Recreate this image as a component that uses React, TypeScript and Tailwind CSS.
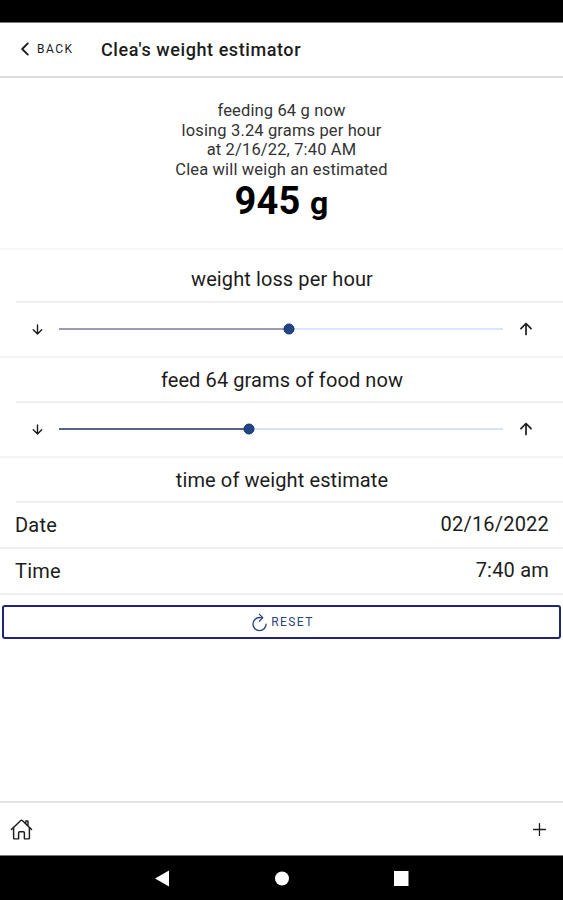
import { useState } from "react";
import { IoAdd, IoArrowDown, IoArrowUp, IoChevronBack, IoHomeOutline, IoRefreshOutline } from "react-icons/io5";

function SectionTitle({ text, className }: { text: string; className: string }) {
    return (
        <div className={`pl-4 ${className}`}>
            <div className="h-full border-b-2 border-[#efefef] pr-[15px] flex items-center justify-center">
                <h2 className="text-[20px] leading-6 tracking-[0.1px]">{text}</h2>
            </div>
        </div>
    );
}

function RangeRow({ value, barClass, trackClass, onChange }: { value: number; barClass: string; trackClass: string; onChange: (v: number) => void }) {
    return (
        <div className="h-[55px] border-b-2 border-[#f4f4f4] flex items-center pb-px pl-[29px] pr-[28px]">
            <button onClick={() => onChange(Math.max(0, value - 1))} className="w-4 flex justify-center">
                <IoArrowDown className="w-[15px] h-[15px]" />
            </button>
            <div className={`relative flex-1 h-[2px] ml-[14px] mr-[14px] ${trackClass}`}>
                <div className={`h-full ${barClass}`} style={{ width: `${value}%` }} />
                <div className="absolute top-1/2 w-[11px] h-[11px] rounded-full bg-[#234682] border border-[#123078] -translate-x-1/2 -translate-y-1/2" style={{ left: `${value}%` }} />
            </div>
            <button onClick={() => onChange(Math.min(100, value + 1))} className="w-[18px] flex justify-center">
                <IoArrowUp className="w-[18px] h-[18px]" />
            </button>
        </div>
    );
}

function ValueRow({ label, value }: { label: string; value: string }) {
    return (
        <div className="h-[46px] border-b-2 border-[#efefef] pl-[15px] pr-[14px] flex items-center justify-between text-[20px] leading-6 text-[#1c1c1c]">
            <span className="tracking-[0.2px]">{label}</span>
            <span className="tracking-[0.2px] pb-[2px]">{value}</span>
        </div>
    );
}

export default function App() {
    const [loss, setLoss] = useState(51.7);
    const [feed, setFeed] = useState(42.7);

    return (
        <div className="h-screen flex flex-col bg-white text-[#1c1c1c] font-[Roboto,sans-serif] overflow-hidden">
            {/* Status bar */}
            <div className="h-[23px] shrink-0 bg-black border-b border-[#777]" />

            <header className="h-[55px] shrink-0 border-b-2 border-[#dcdcdc] flex items-center pb-px pl-[15px]">
                <button className="flex items-center text-[12px] tracking-[1.5px] w-[86px]">
                    <IoChevronBack className="w-[20px] h-[20px] mr-[2px]" />
                    BACK
                </button>
                <h1 className="text-[18px] font-medium tracking-[0.58px]">Clea's weight estimator</h1>
            </header>

            <main className="flex-1">
                <div className="h-[172px] border-b-2 border-[#f6f6f6] pt-[23px] text-center text-[16.5px] leading-[19.6px] tracking-[0.14px] text-[#333]">
                    <p>feeding 64 g now</p>
                    <p>losing 3.24 grams per hour</p>
                    <p>at 2/16/22, 7:40 AM</p>
                    <p>Clea will weigh an estimated</p>
                    <p className="text-[38px] leading-[44px] font-bold text-black">
                        945 <span className="text-[32px]">g</span>
                    </p>
                </div>

                <SectionTitle text="weight loss per hour" className="h-[53px] pt-[6px]" />
                <RangeRow value={loss} barClass="bg-[#9c9bb3]" trackClass="bg-[#dbe5fb]" onChange={setLoss} />
                <SectionTitle text="feed 64 grams of food now" className="h-[45px]" />
                <RangeRow value={feed} barClass="bg-[#586384]" trackClass="bg-[#d5e3fb]" onChange={setFeed} />
                <SectionTitle text="time of weight estimate" className="h-[45px]" />
                <ValueRow label="Date" value="02/16/2022" />
                <ValueRow label="Time" value="7:40 am" />

                <div className="px-[2px] pt-[10px]">
                    <button className="w-full h-[34px] border-2 border-[#1d2670] rounded-[3px] flex items-center justify-center text-[12px] tracking-[1.4px] text-[#2c427c]">
                        <IoRefreshOutline className="w-[21px] h-[21px] mr-px" />
                        RESET
                    </button>
                </div>
            </main>

            <footer className="h-[54px] shrink-0 border-t-2 border-[#e4e4e4] flex items-center justify-between pt-px pl-[10px] pr-[13px]">
                <IoHomeOutline className="w-[23px] h-[23px]" />
                <IoAdd className="w-[21px] h-[21px]" />
            </footer>

            {/* Android navigation buttons */}
            <nav className="h-[45px] shrink-0 bg-black border-t border-[#777]">
                <svg width="563" height="44" viewBox="0 0 563 44" fill="#fff">
                    <path d="M155 22.5L169 14.5V30.5Z" />
                    <circle cx="282" cy="22.5" r="7" />
                    <rect x="394" y="15" width="14.5" height="15" />
                </svg>
            </nav>
        </div>
    );
}
